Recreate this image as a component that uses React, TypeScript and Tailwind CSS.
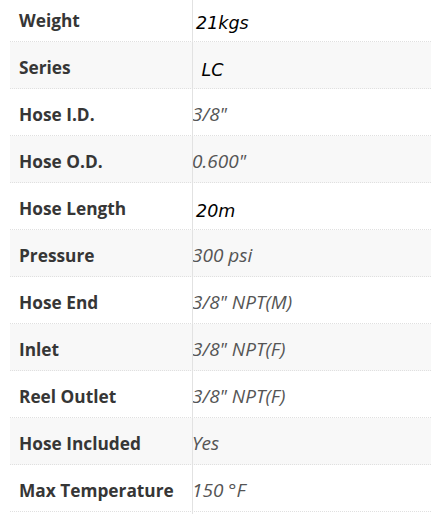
import React from "react";

const rows: { label: string; value: string; dark?: boolean }[] = [
  { label: "Weight", value: "21kgs", dark: true },
  { label: "Series", value: " LC", dark: true },
  { label: "Hose I.D.", value: '3/8"' },
  { label: "Hose O.D.", value: '0.600"' },
  { label: "Hose Length", value: "20m", dark: true },
  { label: "Pressure", value: "300 psi" },
  { label: "Hose End", value: '3/8" NPT(M)' },
  { label: "Inlet", value: '3/8" NPT(F)' },
  { label: "Reel Outlet", value: '3/8" NPT(F)' },
  { label: "Hose Included", value: "Yes" },
  { label: "Max Temperature", value: "150 °F" },
];

export default function App() {
  return (
    <div className="relative h-[514px] w-[431px] overflow-hidden bg-white pl-[10px]">
      <div className="-mt-[5px] flex flex-col">
        {rows.map((r, i) => (
          <div
            key={r.label}
            className={`grid h-[47px] grid-cols-[182px_1fr] border-b border-dotted border-[#e0e0e0] ${
              i % 2 === 1 ? "bg-[#f8f8f8]" : "bg-white"
            }`}
          >
            <div className="flex items-center pl-[9px] pt-[5px] font-['Open_Sans',sans-serif] text-[17.3px] font-bold text-[#363636]">
              {r.label}
            </div>
            {r.dark ? (
              <div className="flex items-center pl-[4px] pt-[11px] font-['DejaVu_Sans',sans-serif] text-[17.5px] italic whitespace-pre text-black">
                {r.value}
              </div>
            ) : (
              <div className="flex items-center pl-[0px] pt-[5px] font-['Open_Sans',sans-serif] text-[19px] italic whitespace-pre text-[#555]">
                {r.value}
              </div>
            )}
          </div>
        ))}
      </div>
      <div className="absolute left-[192px] top-0 h-full w-px bg-[#e2e2e2]" />
    </div>
  );
}
